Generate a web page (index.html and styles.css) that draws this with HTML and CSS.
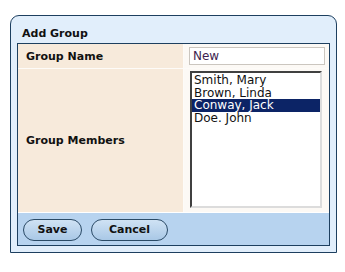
FILE: index.html
```html
<!DOCTYPE html>
<html>
<head>
<meta charset="utf-8">
<link rel="stylesheet" href="styles.css">
</head>
<body>
<div class="panel">
  <div class="title">Add Group</div>
  <div class="box">
    <div class="grid">
      <div class="label row1">Group Name</div>
      <div class="value row1"><div class="input">New</div></div>
      <div class="label row2">Group Members</div>
      <div class="value row2">
        <div class="list">
          <div class="item">Smith, Mary</div>
          <div class="item">Brown, Linda</div>
          <div class="item selected">Conway, Jack</div>
          <div class="item">Doe. John</div>
        </div>
      </div>
    </div>
    <div class="footer">
      <div class="btn save">Save</div>
      <div class="btn cancel">Cancel</div>
    </div>
  </div>
</div>
</body>
</html>
```
FILE: styles.css
```css
html, body {
  margin: 0;
  padding: 0;
  background: #ffffff;
}
body {
  padding: 15px 0 0 10px;
  font-family: "DejaVu Sans", Verdana, sans-serif;
  font-size: 11px;
  color: #000;
}
.panel {
  width: 313px;
  height: 236px;
  border: 1px solid #1d3f5f;
  border-radius: 9px 9px 0 0;
  background: #e1eefb;
  padding: 0 6px;
  box-sizing: content-box;
  display: flex;
  flex-direction: column;
}
.title {
  height: 27px;
  box-sizing: border-box;
  padding: 11px 0 0 5px;
  font-weight: bold;
  font-size: 11px;
  color: #111;
}
.box {
  border: 1px solid #1d3f5f;
  height: 201px;
  display: flex;
  flex-direction: column;
  background: #ffffff;
}
.grid {
  display: grid;
  grid-template-columns: 165px 1fr;
  grid-template-rows: 24px 1fr;
  row-gap: 1px;
  column-gap: 1px;
  flex: 1;
  background: #fdfbf8;
  margin-bottom: 1px;
}
.label {
  background: #f7eadb;
  font-weight: bold;
  display: flex;
  align-items: center;
  padding-left: 8px;
  color: #111;
}
.value {
  background: #fcf9f5;
  padding-left: 5px;
}
.value.row1 {
  padding-top: 3px;
}
.input {
  width: 131px;
  height: 16px;
  border: 1px solid #cbc6bf;
  background: #fff;
  color: #3f1f4f;
  padding-left: 3px;
  box-sizing: content-box;
  line-height: 16px;
  font-size: 12px;
}
.value.row2 {
  padding-top: 2px;
  padding-left: 6px;
}
.list {
  width: 128px;
  height: 132px;
  border-style: solid;
  border-width: 2px;
  border-color: #404040 #dcdcdc #dcdcdc #404040;
  background: #fff;
  padding-top: 1px;
  box-sizing: content-box;
}
.item {
  height: 12.5px;
  line-height: 12px;
  font-size: 12px;
  padding-left: 2px;
  color: #111;
  white-space: nowrap;
}
.item.selected {
  background: #0c2466;
  color: #fff;
}
.footer {
  height: 32px;
  background: #b7d3ef;
  display: flex;
  align-items: center;
  gap: 9px;
  padding-left: 5px;
  padding-top: 1px;
  box-sizing: border-box;
}
.btn {
  height: 20px;
  border: 1px solid #2a4a66;
  border-radius: 11px;
  background: linear-gradient(#cfe2f4, #a9c8e6);
  font-weight: bold;
  font-size: 11px;
  color: #111;
  display: flex;
  align-items: center;
  justify-content: center;
  box-sizing: content-box;
}
.save { width: 57px; }
.cancel { width: 75px; }
```
